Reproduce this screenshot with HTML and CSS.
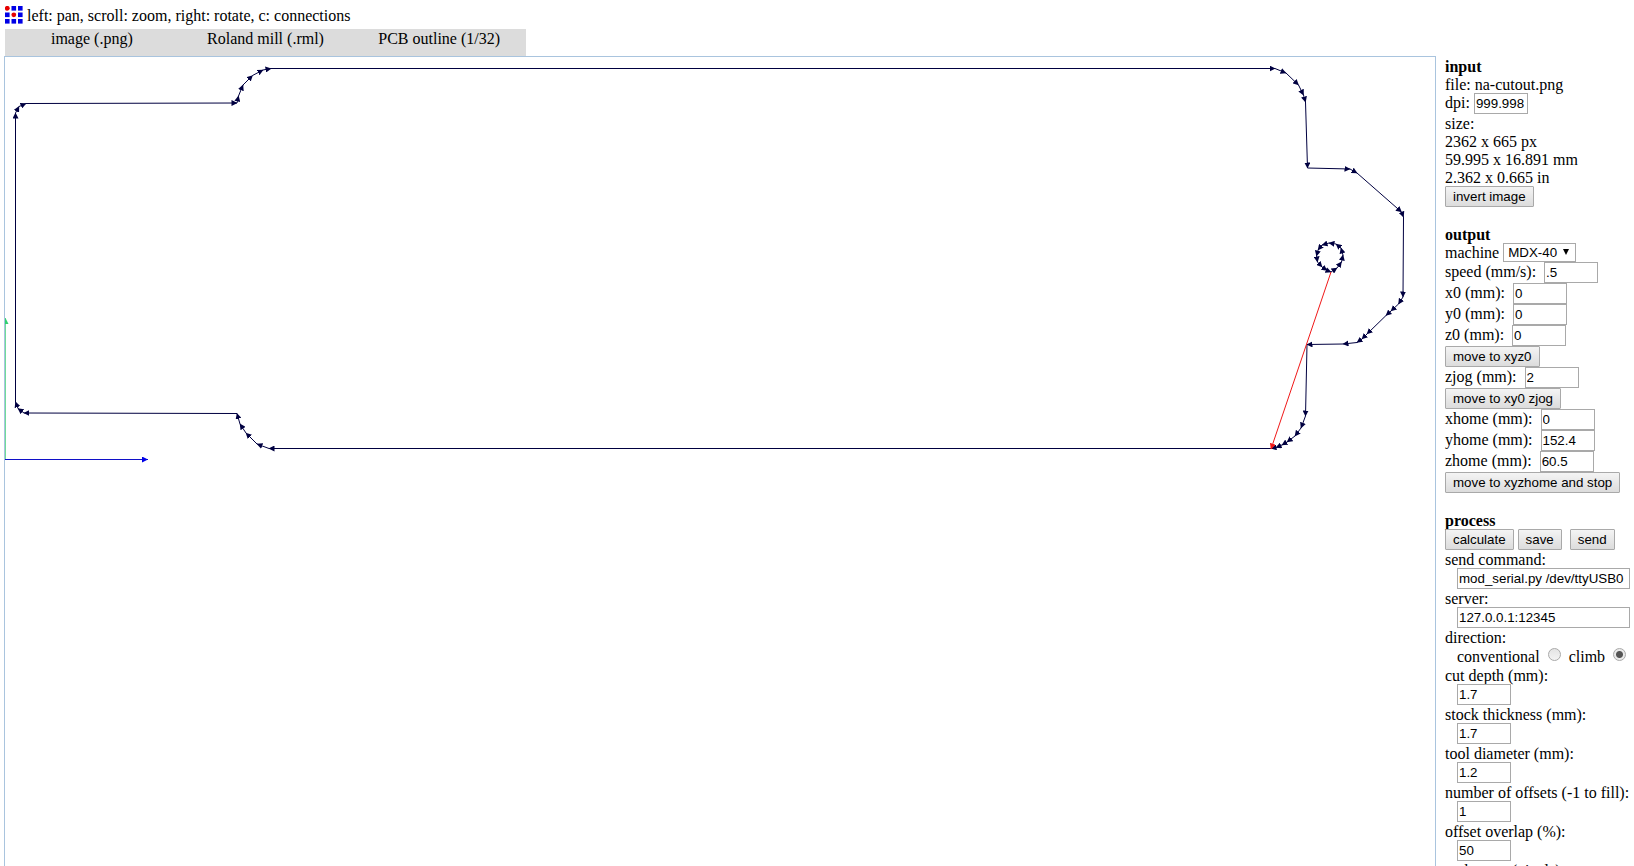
FILE: index.html
```html
<!DOCTYPE html>
<html lang="en">
<head>
    <meta charset="UTF-8">
    <title>fab modules</title>
    <meta name="viewport" content="width=device-width, initial-scale=1">
    <link rel="stylesheet" href="styles.css">
</head>
<body>
    <div class="header">
        <svg class="logo" viewBox="0 0 18 18" width="18" height="18">
            <g fill="#0000e6">
                <rect x="6.5" y="0" width="4.6" height="4.6"/>
                <rect x="13" y="0" width="4.6" height="4.6"/>
                <rect x="0" y="6.5" width="4.6" height="4.6"/>
                <rect x="13" y="6.5" width="4.6" height="4.6"/>
                <rect x="0" y="13" width="4.6" height="4.6"/>
                <rect x="6.5" y="13" width="4.6" height="4.6"/>
                <rect x="13" y="13" width="4.6" height="4.6"/>
            </g>
            <g fill="#e60000">
                <circle cx="2.3" cy="2.3" r="2.4"/>
                <circle cx="8.8" cy="8.8" r="2.4"/>
            </g>
        </svg>
        <span>left: pan, scroll: zoom, right: rotate, c: connections</span>
    </div>
    <div class="menu">
        <div class="menu-item">image (.png)</div>
        <div class="menu-item">Roland mill (.rml)</div>
        <div class="menu-item">PCB outline (1/32)</div>
    </div>
    <div class="workspace">
        <div class="canvas">
            <svg id="toolpath" viewBox="5 57 1430 809">
                <defs>
                    <marker id="arrow-path" class="head-path" viewBox="0 0 6 6" refX="5.5" refY="3" markerWidth="6" markerHeight="6" markerUnits="userSpaceOnUse" orient="auto"><path d="M0 0L6 3L0 6Z"/></marker>
                    <marker id="arrow-jog" class="head-jog" viewBox="0 0 6 6" refX="5.5" refY="3" markerWidth="6" markerHeight="6" markerUnits="userSpaceOnUse" orient="auto"><path d="M0 0L6 3L0 6Z"/></marker>
                    <marker id="arrow-x" class="head-x" viewBox="0 0 6 6" refX="6" refY="3" markerWidth="6" markerHeight="6" markerUnits="userSpaceOnUse" orient="auto"><path d="M0 0L6 3L0 6Z"/></marker>
                    <marker id="arrow-y" class="head-y" viewBox="0 0 6 6" refX="6" refY="3" markerWidth="6" markerHeight="6" markerUnits="userSpaceOnUse" orient="auto"><path d="M0 0L6 3L0 6Z"/></marker>
                </defs>
            </svg>
        </div>
        <form class="controls" onsubmit="return false">
            <div class="row"><b>input</b></div>
            <div class="row">file: na-cutout.png</div>
            <div class="row field near"><label for="dpi">dpi:</label><input type="text" id="dpi" value="999.998"></div>
            <div class="row">size:</div>
            <div class="row">2362 x 665 px</div>
            <div class="row">59.995 x 16.891 mm</div>
            <div class="row">2.362 x 0.665 in</div>
            <div class="row field"><button type="button">invert image</button></div>

            <div class="row section"><b>output</b></div>
            <div class="row machine"><label for="machine">machine</label><select id="machine"><option>MDX-40</option><option>MDX-20</option></select></div>
            <div class="row field"><label for="speed">speed (mm/s):</label><input type="text" id="speed" value=".5"></div>
            <div class="row field"><label for="x0">x0 (mm):</label><input type="text" id="x0" value="0"></div>
            <div class="row field"><label for="y0">y0 (mm):</label><input type="text" id="y0" value="0"></div>
            <div class="row field"><label for="z0">z0 (mm):</label><input type="text" id="z0" value="0"></div>
            <div class="row field"><button type="button">move to xyz0</button></div>
            <div class="row field"><label for="zjog">zjog (mm):</label><input type="text" id="zjog" value="2"></div>
            <div class="row field"><button type="button">move to xy0 zjog</button></div>
            <div class="row field"><label for="xhome">xhome (mm):</label><input type="text" id="xhome" value="0"></div>
            <div class="row field"><label for="yhome">yhome (mm):</label><input type="text" id="yhome" value="152.4"></div>
            <div class="row field"><label for="zhome">zhome (mm):</label><input type="text" id="zhome" value="60.5"></div>
            <div class="row field"><button type="button">move to xyzhome and stop</button></div>

            <div class="row section"><b>process</b></div>
            <div class="row field near"><button type="button">calculate</button><button type="button">save</button><button type="button" class="send">send</button></div>
            <div class="row"><label for="command">send command:</label></div>
            <div class="row field indent"><input type="text" class="wide" id="command" value="mod_serial.py /dev/ttyUSB0"></div>
            <div class="row"><label for="server">server:</label></div>
            <div class="row field indent"><input type="text" class="wide" id="server" value="127.0.0.1:12345"></div>
            <div class="row">direction:</div>
            <div class="row direction indent">
                <label for="conventional">conventional</label><input type="radio" name="direction" id="conventional">
                <label for="climb">climb</label><input type="radio" name="direction" id="climb" checked>
            </div>
            <div class="row"><label for="depth">cut depth (mm):</label></div>
            <div class="row field indent"><input type="text" id="depth" value="1.7"></div>
            <div class="row"><label for="thickness">stock thickness (mm):</label></div>
            <div class="row field indent"><input type="text" id="thickness" value="1.7"></div>
            <div class="row"><label for="diameter">tool diameter (mm):</label></div>
            <div class="row field indent"><input type="text" id="diameter" value="1.2"></div>
            <div class="row"><label for="offsets">number of offsets (-1 to fill):</label></div>
            <div class="row field indent"><input type="text" id="offsets" value="1"></div>
            <div class="row"><label for="overlap">offset overlap (%):</label></div>
            <div class="row field indent"><input type="text" id="overlap" value="50"></div>
            <div class="row"><label for="error">path error (pixels):</label></div>
            <div class="row field indent"><input type="text" id="error" value="1.1"></div>
        </form>
    </div>
    <script>
        // board outline, clockwise
        var outline = [
            [15.5, 113], [19, 106.5], [26, 103.5], [237, 103], [238.5, 96], [243, 85], [252.5, 75.5],
            [263, 70], [271, 68.5], [1275, 68.5], [1286, 73], [1298.5, 85], [1303.5, 95],
            [1305.5, 102], [1307.5, 168], [1350, 169], [1357, 173], [1401.5, 212], [1403.5, 217],
            [1403, 297], [1398.5, 304], [1391, 311], [1386, 315.5], [1367, 334], [1362, 339],
            [1357, 342.5], [1343, 344], [1307, 344.5], [1305.5, 416], [1301, 428], [1295, 436],
            [1287, 442], [1282, 445], [1276, 447.5], [1271, 448.5], [269, 448.5], [257, 444],
            [246, 433], [240, 424], [237, 413.5], [24, 413], [18, 408.5], [15.5, 402], [15.5, 113]
        ];
        // keyring hole
        var hole = [
            [1331, 272], [1337, 268], [1341.5, 262], [1343, 255], [1341, 248], [1336, 244],
            [1329, 243], [1322, 245], [1318, 250], [1316.5, 256], [1317.5, 262], [1322, 267],
            [1327, 270.5], [1331, 272]
        ];

        function drawPath(points, kind) {
            var svg = document.getElementById('toolpath');
            for (var i = 1; i < points.length; i++) {
                var line = document.createElementNS('http://www.w3.org/2000/svg', 'line');
                line.setAttribute('x1', points[i-1][0]);
                line.setAttribute('y1', points[i-1][1]);
                line.setAttribute('x2', points[i][0]);
                line.setAttribute('y2', points[i][1]);
                line.setAttribute('class', 'line-' + kind);
                line.setAttribute('marker-end', 'url(#arrow-' + kind + ')');
                svg.appendChild(line);
            }
        }

        drawPath([[5.5, 459.5], [5.5, 318]], 'y');
        drawPath([[5, 459.5], [148, 459.5]], 'x');
        drawPath(outline, 'path');
        drawPath(hole, 'path');
        drawPath([[1331, 272], [1271, 449]], 'jog');
    </script>
</body>
</html>
```

FILE: styles.css
```css
:root {
    --border: #a9a9a9;
    --canvas-border: #a9c4de;
    --menu-bg: #dcdcdc;
    --path: #000040;
}
* { box-sizing: border-box; }
body {
    margin: 0;
    padding: 5px 0 0 4px;
    height: 100vh;
    overflow: hidden;
    background: #fff;
    color: #000;
    font: 16px/20px "Liberation Serif", "Times New Roman", serif;
}
.header {
    display: flex;
    gap: 4px;
    height: 24px;
    padding-left: 1px;
    line-height: 22px;
}
.logo { margin-top: 1px; }
.menu {
    display: flex;
    width: 521px;
    margin-left: 1px;
    padding-bottom: 7px;
    background: var(--menu-bg);
}
.menu-item {
    flex: 1;
    text-align: center;
}
.workspace {
    display: flex;
    gap: 9px;
}
.canvas {
    flex: 1;
    min-width: 0;
    border: 1px solid var(--canvas-border);
}
.canvas svg {
    display: block;
    width: 100%;
}
.line-path { stroke: var(--path); }
.line-jog { stroke: #f01818; }
.line-x { stroke: #1010c8; }
.line-y { stroke: #70dc98; }
.head-path { fill: var(--path); }
.head-jog { fill: #f01818; }
.head-x { fill: #0000e6; }
.head-y { fill: #30d070; }

.controls {
    width: 189px;
    padding-top: 1px;
    white-space: nowrap;
}
.row {
    display: flex;
    gap: 8px;
    height: 18px;
}
.row.field { height: 21px; }
.row.near { gap: 4px; }
.row.indent { padding-left: 12px; }
.row.section {
    height: 36px;
    padding-top: 18px;
}
.row.machine {
    height: 19px;
    gap: 4px;
}
.row.direction {
    height: 20px;
    line-height: 22px;
}
input, select, button {
    font-family: "Liberation Sans", Arial, sans-serif;
    color: #000;
}
input[type="text"] {
    width: 54px;
    height: 21px;
    margin: 0;
    padding: 0 1px 1px 1px;
    border: 1px solid var(--border);
    background: #fff;
}
input[type="text"].wide { width: 173px; }
select {
    width: 73px;
    height: 19px;
    padding: 0 4px;
    border: 1px solid var(--border);
    border-radius: 0;
    appearance: none;
    background: #fff;
}
/* drop-down arrow */
.machine::after {
    content: "";
    width: 0;
    height: 0;
    margin: 6px 0 0 -17px;
    border: solid transparent;
    border-width: 6px 3px 0 3px;
    border-top-color: #000;
    pointer-events: none;
}
button {
    height: 21px;
    padding: 0 7px;
    border: 1px solid var(--border);
    border-radius: 1px;
    background: linear-gradient(#f4f4f4, #dcdcdc);
}
.send { margin-left: 4px; }
input[type="radio"] {
    appearance: none;
    width: 13px;
    height: 13px;
    margin: 2px 0 0 0;
    border: 1px solid var(--border);
    border-radius: 50%;
    background: linear-gradient(#e4e4e4, #f4f4f4);
}
input[type="radio"]:checked {
    background: radial-gradient(circle, #555 0 3px, #eaeaea 4px);
}
```
